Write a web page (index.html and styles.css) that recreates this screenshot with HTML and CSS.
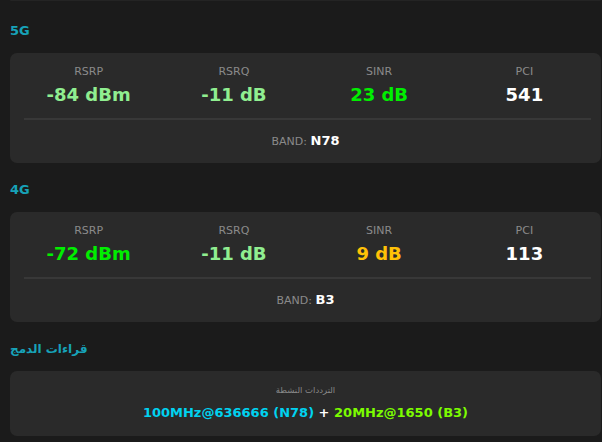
FILE: index.html
```html
<!DOCTYPE html>
<html lang="ar">
<head>
    <meta charset="UTF-8">
    <meta name="viewport" content="width=device-width, initial-scale=1.0">
    <title>Signal</title>
    <link rel="stylesheet" href="styles.css">
</head>
<body>
    <div class="page">
        <div class="prev-card"></div>

        <div class="section section-first">
            <h2 class="section-title">5G</h2>
            <div class="card">
                <div class="metrics">
                    <div class="metric">
                        <div class="metric-label">RSRP</div>
                        <div class="metric-value good">-84 dBm</div>
                    </div>
                    <div class="metric">
                        <div class="metric-label">RSRQ</div>
                        <div class="metric-value good">-11 dB</div>
                    </div>
                    <div class="metric">
                        <div class="metric-label">SINR</div>
                        <div class="metric-value excellent">23 dB</div>
                    </div>
                    <div class="metric">
                        <div class="metric-label">PCI</div>
                        <div class="metric-value plain">541</div>
                    </div>
                </div>
                <div class="divider"></div>
                <div class="band">BAND: <b>N78</b></div>
            </div>
        </div>

        <div class="section">
            <h2 class="section-title">4G</h2>
            <div class="card">
                <div class="metrics">
                    <div class="metric">
                        <div class="metric-label">RSRP</div>
                        <div class="metric-value excellent">-72 dBm</div>
                    </div>
                    <div class="metric">
                        <div class="metric-label">RSRQ</div>
                        <div class="metric-value good">-11 dB</div>
                    </div>
                    <div class="metric">
                        <div class="metric-label">SINR</div>
                        <div class="metric-value fair">9 dB</div>
                    </div>
                    <div class="metric">
                        <div class="metric-label">PCI</div>
                        <div class="metric-value plain">113</div>
                    </div>
                </div>
                <div class="divider"></div>
                <div class="band">BAND: <b>B3</b></div>
            </div>
        </div>

        <div class="section">
            <h2 class="section-title arabic">قراءات الدمج</h2>
            <div class="card ca-card">
                <div class="ca-label">الترددات النشطة</div>
                <div class="ca-value" dir="ltr"><span class="nr">100MHz@636666 (N78)</span> + <span class="lte">20MHz@1650 (B3)</span></div>
            </div>
        </div>
    </div>
</body>
</html>
```

FILE: styles.css
```css
body {
    margin: 0;
    background-color: #1b1b1b;
    font-family: "DejaVu Sans", sans-serif;
    color: #fff;
}

.page {
    padding: 0 1px 0 10px;
    direction: ltr;
}

.prev-card {
    height: 1px;
    background-color: #242424;
    border-radius: 0 0 4px 4px;
}

.section {
    margin-top: 19px;
}

.section-first {
    margin-top: 22px;
}

.section-title {
    margin: 0 0 14px;
    font-size: 13px;
    line-height: 16px;
    font-weight: bold;
    color: #17a2b8;
    text-align: left;
}

.section-title.arabic {
    font-size: 12px;
}

.card {
    background-color: #2a2a2a;
    border-radius: 7px;
    padding: 12px 0 13px;
}

.metrics {
    display: grid;
    grid-template-columns: repeat(4, 1fr);
    padding: 0 4px 0 6px;
}

.metric {
    text-align: center;
}

.metric-label {
    font-size: 11px;
    line-height: 14px;
    color: #8a8a8a;
}

.metric-value {
    margin-top: 5px;
    font-size: 18px;
    line-height: 22px;
    font-weight: bold;
}

.good {
    color: #90ee90;
}

.excellent {
    color: #00ee00;
}

.fair {
    color: #ffc107;
}

.plain {
    color: #fff;
}

.divider {
    height: 2px;
    background-color: #383838;
    margin: 12px 10px 0 14px;
}

.band {
    margin-top: 13px;
    text-align: center;
    font-size: 11px;
    line-height: 16px;
    color: #8a8a8a;
}

.band b {
    font-size: 13px;
    color: #fff;
}

.ca-card {
    padding: 13px 14px 14px;
    text-align: center;
}

.ca-label {
    font-size: 8.5px;
    line-height: 13px;
    color: #888;
}

.ca-value {
    margin-top: 7px;
    font-size: 13px;
    line-height: 18px;
    font-weight: bold;
    color: #fff;
}

.ca-value .nr {
    color: #00d2f0;
}

.ca-value .lte {
    color: #7cfc00;
}
```
